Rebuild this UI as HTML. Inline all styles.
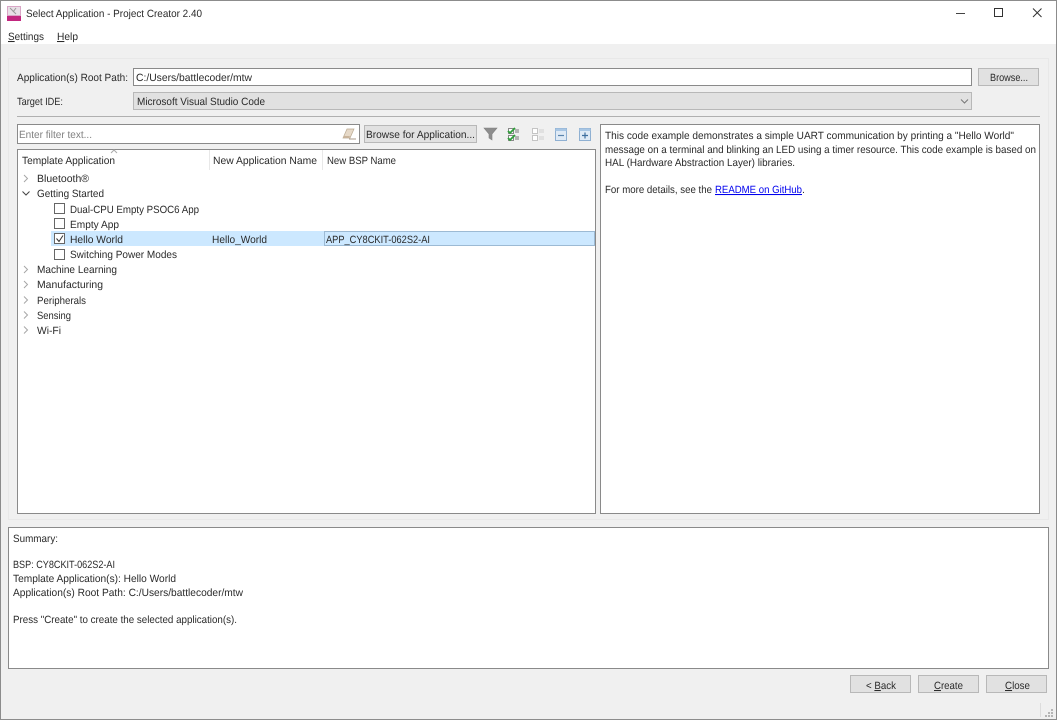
<!DOCTYPE html>
<html><head><meta charset="utf-8"><title>Select Application - Project Creator 2.40</title>
<style>
html,body{margin:0;padding:0;background:#f0f0f0;width:1057px;height:720px;overflow:hidden}
svg{display:block;filter:blur(.35px)}
text{font-family:"Liberation Sans",sans-serif;font-size:10.5px;fill:#2a2a2a;text-rendering:geometricPrecision}
.u{text-decoration:underline}
</style></head><body>
<svg width="1057" height="720" viewBox="0 0 1057 720" xmlns="http://www.w3.org/2000/svg" shape-rendering="crispEdges">
<rect width="1057" height="720" fill="#f0f0f0"/>
<rect x="0" y="0" width="1057" height="44" fill="#fff"/>
<!-- app icon -->
<g><rect x="7" y="6" width="14" height="15" fill="#d9a6c6"/><rect x="8" y="7" width="12" height="8" fill="#e8dfe6"/><rect x="7" y="16" width="14" height="5" fill="#c2267f"/><path d="M10 8l6 6M16 8l-3 4" stroke="#999" fill="none" shape-rendering="auto"/></g>
<text x="26" y="17" textLength="176" lengthAdjust="spacingAndGlyphs">Select Application - Project Creator 2.40</text>
<!-- window controls -->
<rect x="956" y="13" width="9" height="1" fill="#444"/>
<rect x="994.500" y="8.500" width="8" height="8" fill="none" stroke="#333"/>
<path d="M1033 8.500l8.500 8.500M1041.500 8.500l-8.500 8.500" stroke="#333" fill="none" shape-rendering="auto"/>
<!-- menu -->
<text x="8" y="40" textLength="36" lengthAdjust="spacingAndGlyphs"><tspan class="u">S</tspan>ettings</text>
<text x="57" y="40" textLength="21" lengthAdjust="spacingAndGlyphs"><tspan class="u">H</tspan>elp</text>
<!-- group -->
<rect x="8.500" y="58.500" width="1040" height="461" fill="#f0f0f0" stroke="#e8e8e8"/>
<text x="17" y="81" textLength="111" lengthAdjust="spacingAndGlyphs">Application(s) Root Path:</text>
<rect x="133.500" y="68.500" width="838" height="17" fill="#fff" stroke="#8a8a8a"/>
<text x="136" y="81" textLength="116" lengthAdjust="spacingAndGlyphs">C:/Users/battlecoder/mtw</text>
<rect x="978.500" y="68.500" width="60" height="17" fill="#e1e1e1" stroke="#b8b8b8"/>
<text x="990" y="81" textLength="38" lengthAdjust="spacingAndGlyphs">Browse...</text>
<text x="17" y="105" textLength="46" lengthAdjust="spacingAndGlyphs">Target IDE:</text>
<rect x="133.500" y="92.500" width="838" height="17" fill="#e1e1e1" stroke="#b8b8b8"/>
<text x="137" y="105" textLength="128" lengthAdjust="spacingAndGlyphs">Microsoft Visual Studio Code</text>
<path d="M961 99.500l3.500 3.500 3.500-3.500" stroke="#777" fill="none" shape-rendering="auto"/>
<rect x="17" y="116" width="1023" height="1" fill="#b0b0b0"/>
<!-- filter -->
<rect x="17.500" y="124.500" width="342" height="19" fill="#fff" stroke="#8a8a8a"/>
<text x="19" y="138" textLength="73" lengthAdjust="spacingAndGlyphs" style="fill:#808080">Enter filter text...</text>
<g shape-rendering="auto"><path d="M347 129h7l-4 9h-7z" fill="#e6d9c8" stroke="#b9a890" stroke-width=".7"/><path d="M343 138h6l1-2h-6z" fill="#c9b49b"/><path d="M349 139h7" stroke="#a89a88"/></g>
<rect x="364.500" y="125.500" width="112" height="17" fill="#e1e1e1" stroke="#b8b8b8"/>
<text x="366" y="138" textLength="109" lengthAdjust="spacingAndGlyphs">Browse for Application...</text>
<!-- toolbar icons -->
<g shape-rendering="auto">
<path d="M484 128h13l-5 6v6l-3-2v-4z" fill="#8d8d8d" stroke="#808080" stroke-width=".6"/>
<rect x="508.500" y="128.500" width="5" height="5" fill="#fff" stroke="#888"/><rect x="508.500" y="135.500" width="5" height="5" fill="#fff" stroke="#888"/>
<path d="M508 131l2 2 5-5M508 138l2 2 5-5" stroke="#2e9e3a" stroke-width="1.800" fill="none"/>
<path d="M515 130h4M515 132h4M515 137h4M515 139h4" stroke="#777" fill="none"/>
<rect x="532.500" y="128.500" width="5" height="5" fill="#fff" stroke="#c4c4c4"/><rect x="532.500" y="135.500" width="5" height="5" fill="#fff" stroke="#c4c4c4"/>
<path d="M539 130h5M539 132h5M539 137h5M539 139h5" stroke="#cfcfcf" fill="none"/>
<rect x="555.500" y="128.500" width="11" height="12" fill="#dfeaf6" stroke="#8fb0d2"/><rect x="555.500" y="128.500" width="11" height="2.500" fill="#a8c6e4"/>
<path d="M558 135.500h6" stroke="#5a84ad" stroke-width="1.200"/>
<rect x="579.500" y="128.500" width="11" height="12" fill="#dfeaf6" stroke="#8fb0d2"/><rect x="579.500" y="128.500" width="11" height="2.500" fill="#a8c6e4"/>
<path d="M582 135.500h6M585 132.500v6" stroke="#3f6f9f" stroke-width="1.200"/>
</g>
<!-- tree -->
<rect x="17.500" y="149.500" width="578" height="364" fill="#fff" stroke="#8a8a8a"/>
<rect x="209" y="150" width="1" height="20" fill="#e8e8e8"/>
<rect x="322" y="150" width="1" height="20" fill="#e8e8e8"/>
<path d="M111 153l3-3 3 3" stroke="#aaa" fill="none" shape-rendering="auto"/>
<text x="22" y="164" textLength="93" lengthAdjust="spacingAndGlyphs">Template Application</text>
<text x="213" y="164" textLength="104" lengthAdjust="spacingAndGlyphs">New Application Name</text>
<text x="327" y="164" textLength="69" lengthAdjust="spacingAndGlyphs">New BSP Name</text>
<rect x="51" y="231" width="544" height="15" fill="#cce8ff"/>
<rect x="324.500" y="231.500" width="270" height="14" fill="#cce8ff" stroke="#6b8ba8" stroke-dasharray="1 1"/>
<g fill="none" stroke="#a6a6a6" shape-rendering="auto">
<path d="M24 175l3.500 3.500-3.500 3.500"/>
<path d="M24 266l3.500 3.500-3.500 3.500"/>
<path d="M24 281l3.500 3.500-3.500 3.500"/>
<path d="M24 296.500l3.500 3.500-3.500 3.500"/>
<path d="M24 311.500l3.500 3.500-3.500 3.500"/>
<path d="M24 326.500l3.500 3.500-3.500 3.500"/>
<path d="M22.500 191.500l3.500 3.500 3.500-3.500" stroke="#444"/>
</g>
<text x="37" y="182" textLength="52" lengthAdjust="spacingAndGlyphs">Bluetooth®</text>
<text x="37" y="197" textLength="67" lengthAdjust="spacingAndGlyphs">Getting Started</text>
<g fill="#fff" stroke="#666">
<rect x="54.500" y="203.500" width="10" height="10"/>
<rect x="54.500" y="218.500" width="10" height="10"/>
<rect x="54.500" y="233.500" width="10" height="10"/>
<rect x="54.500" y="249.500" width="10" height="10"/>
</g>
<path d="M56.500 238.500l2.500 3 4-6" stroke="#333" fill="none" shape-rendering="auto"/>
<text x="70" y="213" textLength="129" lengthAdjust="spacingAndGlyphs">Dual-CPU Empty PSOC6 App</text>
<text x="70" y="228" textLength="49" lengthAdjust="spacingAndGlyphs">Empty App</text>
<text x="70" y="243" textLength="53" lengthAdjust="spacingAndGlyphs">Hello World</text>
<text x="212" y="243" textLength="55" lengthAdjust="spacingAndGlyphs">Hello_World</text>
<text x="326" y="243" textLength="104" lengthAdjust="spacingAndGlyphs">APP_CY8CKIT-062S2-AI</text>
<text x="70" y="258" textLength="107" lengthAdjust="spacingAndGlyphs">Switching Power Modes</text>
<text x="37" y="273" textLength="80" lengthAdjust="spacingAndGlyphs">Machine Learning</text>
<text x="37" y="288" textLength="66" lengthAdjust="spacingAndGlyphs">Manufacturing</text>
<text x="37" y="304" textLength="49" lengthAdjust="spacingAndGlyphs">Peripherals</text>
<text x="37" y="319" textLength="34" lengthAdjust="spacingAndGlyphs">Sensing</text>
<text x="37" y="334" textLength="24" lengthAdjust="spacingAndGlyphs">Wi-Fi</text>
<!-- description -->
<rect x="600.500" y="124.500" width="439" height="389" fill="#fff" stroke="#8a8a8a"/>
<text x="605" y="139" textLength="409" lengthAdjust="spacingAndGlyphs">This code example demonstrates a simple UART communication by printing a "Hello World"</text>
<text x="605" y="153" textLength="431" lengthAdjust="spacingAndGlyphs">message on a terminal and blinking an LED using a timer resource. This code example is based on</text>
<text x="605" y="166" textLength="190" lengthAdjust="spacingAndGlyphs">HAL (Hardware Abstraction Layer) libraries.</text>
<text x="605" y="193" textLength="107" lengthAdjust="spacingAndGlyphs">For more details, see the</text>
<text x="715" y="193" textLength="87" lengthAdjust="spacingAndGlyphs" class="u" style="fill:#0000ee">README on GitHub</text>
<text x="802" y="193">.</text>
<!-- summary -->
<rect x="8.500" y="527.500" width="1040" height="141" fill="#fff" stroke="#8a8a8a"/>
<text x="13" y="542" textLength="45" lengthAdjust="spacingAndGlyphs">Summary:</text>
<text x="13" y="568" textLength="102" lengthAdjust="spacingAndGlyphs">BSP: CY8CKIT-062S2-AI</text>
<text x="13" y="582" textLength="163" lengthAdjust="spacingAndGlyphs">Template Application(s): Hello World</text>
<text x="13" y="596" textLength="230" lengthAdjust="spacingAndGlyphs">Application(s) Root Path: C:/Users/battlecoder/mtw</text>
<text x="13" y="623" textLength="224" lengthAdjust="spacingAndGlyphs">Press "Create" to create the selected application(s).</text>
<!-- buttons -->
<rect x="850.500" y="675.500" width="60" height="17" fill="#e1e1e1" stroke="#b8b8b8"/>
<text x="866" y="689" textLength="30" lengthAdjust="spacingAndGlyphs">&lt; <tspan class="u">B</tspan>ack</text>
<rect x="918.500" y="675.500" width="60" height="17" fill="#e1e1e1" stroke="#b8b8b8"/>
<text x="934" y="689" textLength="29" lengthAdjust="spacingAndGlyphs"><tspan class="u">C</tspan>reate</text>
<rect x="986.500" y="675.500" width="60" height="17" fill="#e1e1e1" stroke="#b8b8b8"/>
<text x="1005" y="689" textLength="25" lengthAdjust="spacingAndGlyphs"><tspan class="u">C</tspan>lose</text>
<!-- grip -->
<rect x="1040" y="703" width="1" height="14" fill="#dcdcdc"/>
<g fill="#b5b5b5"><rect x="1051" y="709" width="2" height="2"/><rect x="1048" y="712" width="2" height="2"/><rect x="1051" y="712" width="2" height="2"/><rect x="1045" y="715" width="2" height="2"/><rect x="1048" y="715" width="2" height="2"/><rect x="1051" y="715" width="2" height="2"/></g>
<!-- window border -->
<rect x="0.500" y="0.500" width="1056" height="719" fill="none" stroke="#8c8c8c"/>
</svg>
</body></html>
